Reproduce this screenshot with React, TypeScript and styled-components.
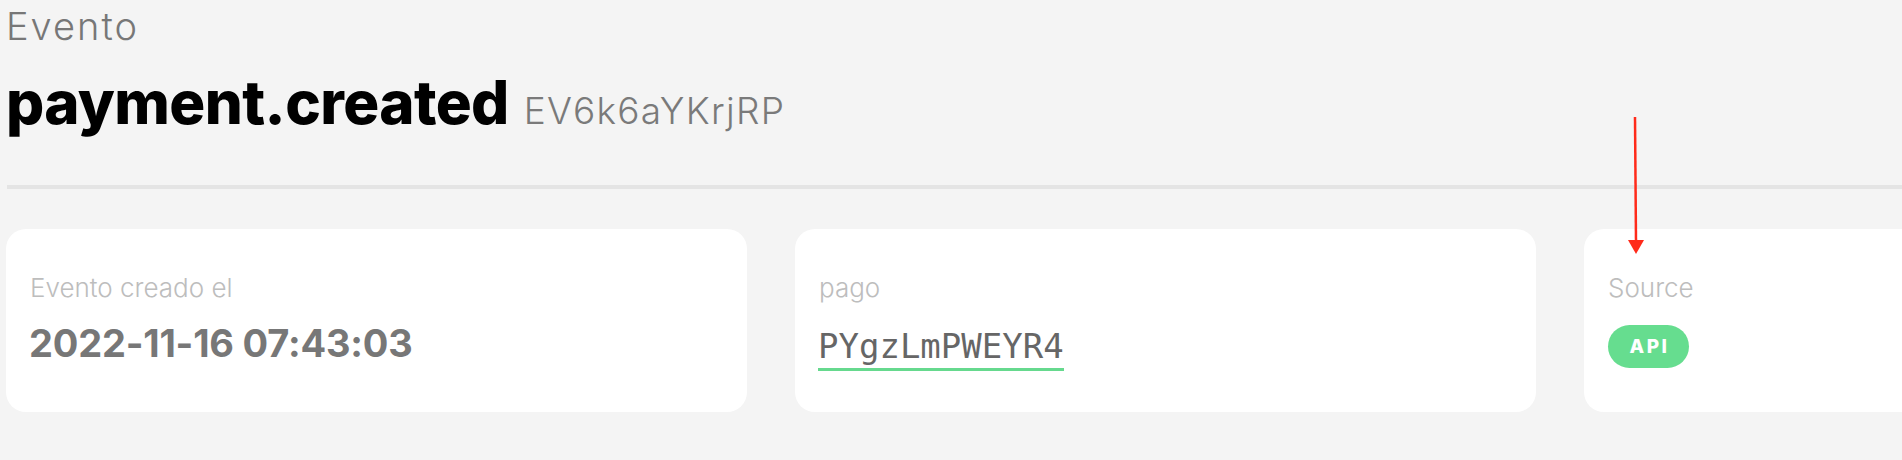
import React from "react";
import styled, { createGlobalStyle } from "styled-components";

const Global = createGlobalStyle`
  html, body {
    margin: 0;
    padding: 0;
    background: #f4f4f4;
    overflow: hidden;
  }
  body {
    font-family: Inter, "Open Sans", sans-serif;
  }
`;

const Page = styled.div`
  position: relative;
  width: 1902px;
  height: 460px;
  padding: 7px 0 0 6px;
  box-sizing: border-box;
  overflow: hidden;
`;

const Kicker = styled.div`
  font-size: 38px;
  line-height: 1;
  font-weight: 300;
  letter-spacing: 2px;
  color: #777777;
`;

const TitleRow = styled.div`
  display: flex;
  align-items: baseline;
  gap: 15px;
  margin-top: 27px;
`;

const Title = styled.h1`
  margin: 0;
  font-size: 60px;
  line-height: 1;
  font-weight: 800;
  letter-spacing: -0.6px;
  color: #000000;
`;

const EventId = styled.span`
  font-size: 37px;
  line-height: 1;
  font-weight: 300;
  letter-spacing: 1.3px;
  color: #7a7a7a;
`;

const Divider = styled.hr`
  margin: 53px 0 0 1px;
  border: none;
  height: 4px;
  background: #e4e4e4;
`;

const CardRow = styled.div`
  display: flex;
  gap: 48px;
  margin-top: 40px;
`;

const Card = styled.section`
  flex: 0 0 741px;
  height: 183px;
  box-sizing: border-box;
  padding: 46px 24px 0 24px;
  background: #ffffff;
  border-radius: 20px;
  display: flex;
  flex-direction: column;
  align-items: flex-start;
`;

const Label = styled.div`
  font-size: 26px;
  line-height: 1;
  font-weight: 300;
  color: #bdbdbd;
`;

const DateValue = styled.div`
  margin-top: 23px;
  margin-left: -1px;
  font-size: 38px;
  line-height: 1;
  font-weight: 700;
  letter-spacing: -0.2px;
  color: #777777;
`;

const LinkValue = styled.a`
  margin-top: 28px;
  margin-left: -1px;
  font-family: "DejaVu Sans Mono", "Liberation Mono", monospace;
  font-size: 34px;
  line-height: 1;
  color: #666666;
  text-decoration: none;
  padding-bottom: 5px;
  border-bottom: 3px solid #66d98e;
`;

const Badge = styled.span`
  margin-top: 24px;
  width: 81px;
  height: 43px;
  border-radius: 22px;
  background: #66dd8f;
  color: #ffffff;
  font-size: 19px;
  font-weight: 800;
  letter-spacing: 2.5px;
  display: flex;
  align-items: center;
  justify-content: center;
  padding-left: 2px;
  box-sizing: border-box;
`;

const Annotation = styled.svg`
  position: absolute;
  left: 1626px;
  top: 116px;
  width: 20px;
  height: 140px;
  pointer-events: none;
`;

export default function App() {
  return (
    <>
      <Global />
      <Page>
        <Kicker>Evento</Kicker>
        <TitleRow>
          <Title>payment.created</Title>
          <EventId>EV6k6aYKrjRP</EventId>
        </TitleRow>
        <Divider />
        <CardRow>
          <Card>
            <Label>Evento creado el</Label>
            <DateValue>2022-11-16 07:43:03</DateValue>
          </Card>
          <Card>
            <Label>pago</Label>
            <LinkValue href="#">PYgzLmPWEYR4</LinkValue>
          </Card>
          <Card>
            <Label>Source</Label>
            <Badge>API</Badge>
          </Card>
        </CardRow>
        <Annotation viewBox="0 0 20 140">
          <line x1="9" y1="1" x2="10" y2="126" stroke="#ff2a1a" strokeWidth="2.5" />
          <polygon points="2,124 18,124 10,138" fill="#ff2a1a" />
        </Annotation>
      </Page>
    </>
  );
}
